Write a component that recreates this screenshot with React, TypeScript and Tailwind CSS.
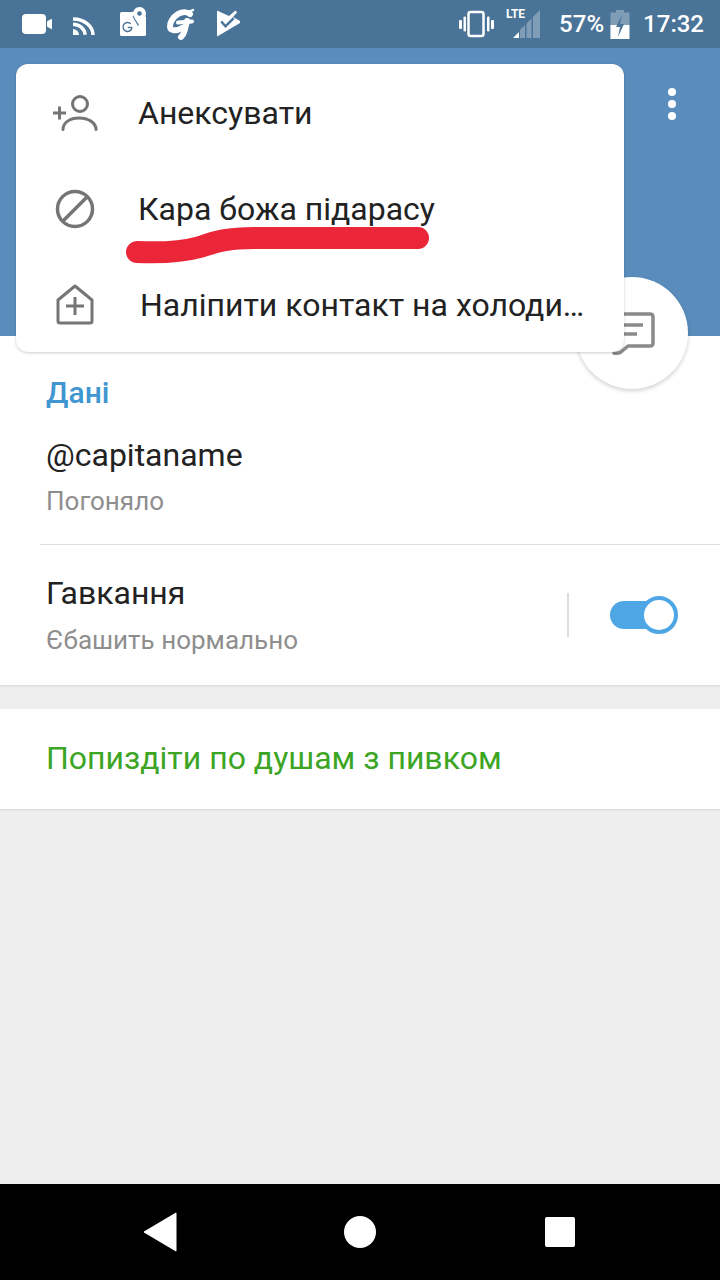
import React from "react";

function StatusLeft() {
  return (
    <div className="flex items-center">
      <svg width="240" height="48" viewBox="0 0 240 48" fill="#fff">
        <rect x="22" y="14" width="24" height="20" rx="4" />
        <path d="M47 21.5l4-2.5q1-.5 1 1v8q0 1.500-1 1l-4-2.500z" />
        <path d="M73 29a6 6 0 0 1 6 6h-6z" />
        <path d="M73 24.500a12 10.500 0 0 1 12 10.500" fill="none" stroke="#fff" strokeWidth="3.500" transform="translate(0 -.2)" />
        <path d="M73 19a20 16 0 0 1 20 16" fill="none" stroke="#fff" strokeWidth="3.500" />
        <path d="M121 12h14.500l-3 4.500 5.500 9.500 4-6 2.500-3.500h1.500v18q0 1.500-1.500 1.500h-23a1.500 1.500 0 0 1-1.500-1.500V13.500q0-1.500 1.500-1.500z" />
        <path fillRule="evenodd" d="M139.500 7a6.500 6.500 0 0 1 6 9c-1.200 3-4 6.500-6 9.500-2-3-4.800-6.500-6-9.500a6.500 6.500 0 0 1 6-9zm0 4.200a2.300 2.300 0 1 0 0 4.600 2.300 2.300 0 0 0 0-4.600z" />
        <path d="M132 27.200a4.500 4.500 0 1 1-1.300-3.400" fill="none" stroke="#4a7398" strokeWidth="1.400" />
        <path d="M127.800 27.500h4.200" fill="none" stroke="#4a7398" strokeWidth="1.400" />
        <g fill="none" stroke="#fff" strokeLinecap="round">
          <path d="M190 14c-3-2.500-8-2.500-12 0-5 3-8.500 9-8 13 .5 4 6 4.500 12 1" strokeWidth="6" />
          <path d="M178 22.500l14-1" strokeWidth="4" />
          <path d="M187 21l-2.500 10c-.5 2-1.500 4-3.500 6" strokeWidth="6" />
          <path d="M184 11.500q5 1 9-1.500" strokeWidth="2.500" />
        </g>
        <path fillRule="evenodd" d="M217 11.500q0-1 1-.5l11 5 6.500-5.500 1.500 2-4 4.500 8 4.500q.5.400 0 .9L218 36q-1 .5-1-.5zm5 9l-1.500 2 5 5.500 9-9-1.700-1.700-7.300 7.200z" />
      </svg>
    </div>
  );
}

function StatusRight() {
  return (
    <div className="flex items-center h-12 text-white font-medium">
      <svg width="100" height="48" viewBox="459 0 100 48" fill="none" className="shrink-0">
        <rect x="469.500" y="12" width="15" height="24" rx="2" stroke="#fff" strokeWidth="2.500" />
        <rect x="460" y="20" width="3" height="9" rx="1" fill="#fff" />
        <rect x="464.500" y="16.500" width="2.500" height="15" rx="1" fill="#fff" />
        <rect x="488" y="16.500" width="2.500" height="15" rx="1" fill="#fff" />
        <rect x="492" y="20" width="3" height="9" rx="1" fill="#fff" />
        <path d="M514 38l6-6v6z" fill="#fff" />
        <path d="M521 30l5-5v13h-5zM527.500 23.500l5-5V38h-5zM534 17l7-7v28h-7z" fill="#fff" fillOpacity="0.3" />
      </svg>
      <span className="absolute left-[506px] top-[8px] text-[12px] leading-[12px] font-bold tracking-[-0.2px]">LTE</span>
      <span className="w-[46px] ml-[1px] text-[24px] leading-[48px] whitespace-nowrap">57%</span>
      <svg width="20" height="30" viewBox="0 0 20 30" className="ml-[5px] mt-[2px] shrink-0">
        <path d="M6 0h8v2.500h5.500V29H.5V2.500H6z" fill="#fff" fillOpacity="0.3" />
        <path d="M.5 15h18.900v14H.5z" fill="#fff" />
        <path d="M12 5l-6 12h4l-2 10 6-13h-4z" fill="#4a7398" />
      </svg>
      <span className="ml-[13px] text-[24px] leading-[48px] whitespace-nowrap">17:32</span>
    </div>
  );
}

function MenuItem({ icon, label, third = false }: { icon: React.ReactNode; label: string; third?: boolean }) {
  return (
    <div className="h-24 flex items-center relative">
      <div className="w-[122px] flex justify-center shrink-0 -ml-[2px] mt-[1px]">{icon}</div>
      <span className={(third ? "ml-[4px]" : "ml-[2px]") + " mt-[2px] whitespace-nowrap text-[32px] leading-[40px] text-[#222222]"}>
        {label}
      </span>
    </div>
  );
}

export default function App() {
  return (
    <div className="relative w-[720px] h-[1280px] overflow-hidden flex flex-col bg-[#eeeeee] font-['Roboto',sans-serif]">
      <div className="h-12 bg-[#4a7398] flex items-center justify-between pr-4 shrink-0">
        <StatusLeft />
        <StatusRight />
      </div>

      <div className="h-[288px] bg-[#5a8dbc] shrink-0 flex justify-end pr-[44px] pt-10">
        <div className="flex flex-col gap-[4px]">
          <div className="w-2 h-2 rounded-full bg-white" />
          <div className="w-2 h-2 rounded-full bg-white" />
          <div className="w-2 h-2 rounded-full bg-white" />
        </div>
      </div>

      <div className="bg-white h-[349px] shrink-0 shadow-[0_1px_2px_rgba(0,0,0,0.1)] flex flex-col">
        <div className="pl-[46px] pt-[39px] text-[30px] leading-[36px] font-medium text-[#3f96d0]">Дані</div>
        <div className="pl-[46px] pt-[26px] text-[32px] leading-[36px] text-[#222222]">@capitaname</div>
        <div className="pl-[46px] pt-[12px] text-[26px] leading-[32px] text-[#8e8e8e]">Погоняло</div>
        <div className="ml-10 mt-[27px] h-px bg-[#dddddd]" />
        <div className="flex items-start justify-between pl-[46px] pr-[42px]">
          <div className="flex flex-col">
            <span className="pt-[30px] text-[32px] leading-[36px] text-[#222222]">Гавкання</span>
            <span className="pt-[13px] text-[26px] leading-[32px] text-[#8e8e8e]">Єбашить нормально</span>
          </div>
          <div className="flex items-center mt-[48px]">
            <div className="w-[2px] h-[44px] bg-[#dddddd] mr-[41px]" />
            <div className="relative w-[68px] h-[38px] flex items-center">
              <div className="w-[60px] h-[28px] rounded-full bg-[#4fa6e5]" />
              <div className="absolute right-0 top-0 w-[38px] h-[38px] rounded-full bg-white border-[4px] border-[#4fa6e5]" />
            </div>
          </div>
        </div>
      </div>

      <div className="mt-6 bg-white h-[100px] shrink-0 flex items-center pl-[46px] pb-[2px] shadow-[0_1px_2px_rgba(0,0,0,0.1)] text-[32px] leading-[36px] text-[#3ca524]">
        Попиздіти по душам з пивком
      </div>

      <div className="flex-1" />

      <div className="h-24 bg-black shrink-0 flex items-center relative">
        <svg width="720" height="96" viewBox="0 0 720 96" fill="#fff">
          <path d="M176 29v38l-32-19z" stroke="#fff" strokeWidth="1" strokeLinejoin="round" />
          <circle cx="360" cy="48" r="16" />
          <rect x="545" y="33" width="30" height="30" rx="2" />
        </svg>
      </div>

      {/* FAB overlapping the header edge */}
      <div className="absolute left-[576px] top-[277px] w-[112px] h-[112px] rounded-full bg-white shadow-[0_2px_4px_rgba(0,0,0,0.18)] flex items-center justify-center">
        <svg width="48" height="48" viewBox="0 0 48 48" fill="none" stroke="#8a8a8a" strokeWidth="3.500">
          <path d="M8 5h34q3 0 3 3v26q0 3-3 3H20l-7 6q-3 2-7 1" strokeLinejoin="round" strokeLinecap="round" />
          <path d="M10 16h25M10 25h19" />
        </svg>
      </div>

      {/* Overflow menu */}
      <div className="absolute left-4 top-16 w-[608px] h-[288px] rounded-xl bg-white shadow-[0_1px_3px_rgba(0,0,0,0.2)]">
        <MenuItem
          label="Анексувати"
          icon={
            <svg width="46" height="36" viewBox="0 0 46 36" fill="none" stroke="#757575" strokeWidth="3">
              <circle cx="28" cy="9" r="7.500" />
              <path d="M11 34.500c0-7 7-11.500 16-11.500s17 4.500 17 11.500" strokeLinecap="round" />
              <path d="M1 18h13M7.500 11.500v13" />
            </svg>
          }
        />
        <MenuItem
          label="Кара божа підарасу"
          icon={
            <svg width="40" height="40" viewBox="0 0 40 40" fill="none" stroke="#757575" strokeWidth="3.500">
              <circle cx="20" cy="20" r="17.500" />
              <path d="M7.500 32.500l25-25" />
            </svg>
          }
        />
        <MenuItem
          third
          label="Наліпити контакт на холоди…"
          icon={
            <svg width="40" height="42" viewBox="0 0 40 42" fill="none" stroke="#757575" strokeWidth="3">
              <path d="M3 16L20 2l17 14v21q0 2-2 2H5q-2 0-2-2z" strokeLinejoin="round" />
              <path d="M20 13v18M11 22h18" />
            </svg>
          }
        />
      </div>

      {/* Hand-drawn red underline */}
      <svg width="320" height="48" viewBox="0 0 320 48" fill="none" className="absolute left-[120px] top-[222px]">
        <path d="M17 30C40 31 62 30 80 25 95 20 105 16 135 16L298 16" stroke="#ec2639" strokeWidth="22" strokeLinecap="round" />
      </svg>
    </div>
  );
}
